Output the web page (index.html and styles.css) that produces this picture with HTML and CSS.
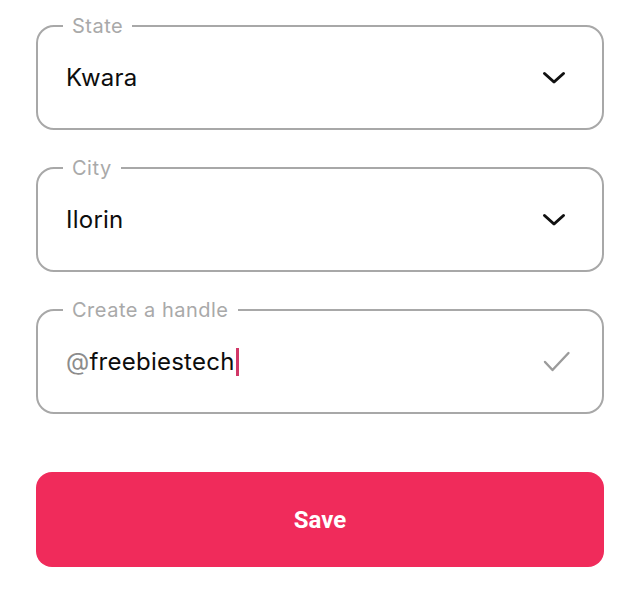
FILE: index.html
```html
<!DOCTYPE html>
<html lang="en">
<head>
<meta charset="utf-8">
<title>Profile form</title>
<link rel="stylesheet" href="styles.css">
</head>
<body>
<form class="form">
  <fieldset class="field">
    <legend class="label">State</legend>
    <div class="row">
      <span class="value">Kwara</span>
      <svg class="chevron" width="24" height="14" viewBox="0 0 24 14" aria-hidden="true"><polyline points="2.5,2.5 12,11 21.5,2.5" fill="none" stroke="#111" stroke-width="3" stroke-linecap="round" stroke-linejoin="round"/></svg>
    </div>
  </fieldset>
  <fieldset class="field">
    <legend class="label">City</legend>
    <div class="row">
      <span class="value">Ilorin</span>
      <svg class="chevron" width="24" height="14" viewBox="0 0 24 14" aria-hidden="true"><polyline points="2.5,2.5 12,11 21.5,2.5" fill="none" stroke="#111" stroke-width="3" stroke-linecap="round" stroke-linejoin="round"/></svg>
    </div>
  </fieldset>
  <fieldset class="field">
    <legend class="label">Create a handle</legend>
    <div class="row">
      <span class="value"><span class="at">@</span>freebiestech<span class="caret"></span></span>
      <svg class="check" width="28" height="24" viewBox="0 0 28 24" aria-hidden="true"><polyline points="2,12 9.5,20 25.5,3" fill="none" stroke="#9b9b9b" stroke-width="2.4" stroke-linecap="round" stroke-linejoin="round"/></svg>
    </div>
  </fieldset>
  <button type="button" class="save">Save</button>
</form>
</body>
</html>
```
FILE: styles.css
```css
html, body {
  margin: 0;
  background: #ffffff;
}
body {
  font-family: Inter, "Noto Sans", sans-serif;
}
.form {
  display: flex;
  flex-direction: column;
  gap: 26px;
  padding: 14px 36px 0 36px;
  width: 568px;
}
.field {
  margin: 0;
  padding: 0;
  min-width: 0;
  border: 2px solid #a8a8a8;
  border-radius: 18px;
}
.label {
  font-size: 20px;
  line-height: 24px;
  letter-spacing: 0.5px;
  color: #a9a9a9;
  padding: 0 9px;
  margin-left: 25px;
}
.row {
  display: flex;
  align-items: center;
  justify-content: space-between;
  box-sizing: border-box;
  height: 90px;
  padding: 0 32px 10px 28px;
}
.value {
  display: flex;
  align-items: center;
  font-size: 24px;
  line-height: 30px;
  letter-spacing: 0.25px;
  color: #0d0d0d;
}
.at {
  color: #8c8c8c;
}
.caret {
  display: inline-block;
  width: 3px;
  height: 28px;
  margin-left: 1px;
  background: #d13767;
}
.chevron {
  margin-right: 4px;
}
.check {
  margin-right: -1px;
}
.save {
  margin-top: 32px;
  height: 95px;
  border: none;
  border-radius: 16px;
  background: #f02b5b;
  color: #ffffff;
  font-family: Roboto, "Liberation Sans", sans-serif;
  font-weight: 700;
  font-size: 24px;
}
```
